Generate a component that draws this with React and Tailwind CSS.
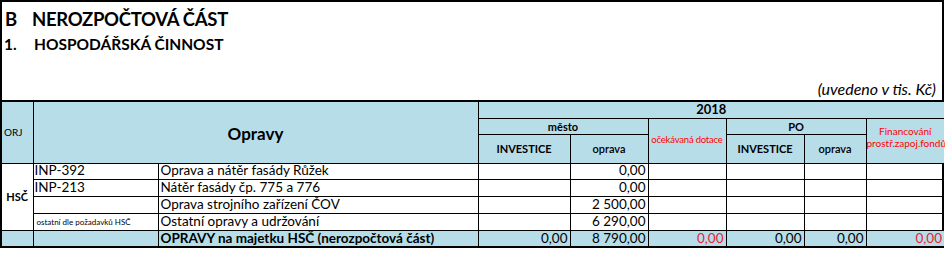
import React from 'react';

const rows = [
  { code: 'INP-392', name: 'Oprava a nátěr fasády Růžek', oprava: '0,00', line: 'solid' },
  { code: 'INP-213', name: 'Nátěr fasády čp. 775 a 776', oprava: '0,00', line: 'dotted' },
  { code: '', name: 'Oprava strojního zařízení ČOV', oprava: '2 500,00', line: 'solid' },
  { code: 'ostatní dle požadavků HSČ', small: true, name: 'Ostatní opravy a udržování', oprava: '6 290,00', line: 'solid' },
];

const App = () => {
  const cell = 'border border-black p-0';
  const head = 'border border-black bg-[#b7dde8] p-0 text-center font-bold';

  return (
    <div className="w-[945px] h-[253px] bg-white text-black" style={{ fontFamily: 'Lato, "Open Sans", sans-serif' }}>
      <div className="w-[944px] border-l-2 border-t-2 border-r-2 border-black">
        {/* Title block */}
        <div className="h-[98px] flex flex-col">
          <div className="flex items-center h-[32px] pt-[2px] text-[18.5px] font-bold leading-none">
            <span className="w-[30px] pl-[3px]">B</span>
            <span className="tracking-[-0.3px]">NEROZPOČTOVÁ ČÁST</span>
          </div>
          <div className="flex items-center h-[22px] text-[15.5px] font-bold leading-none">
            <span className="w-[32px] pl-[2px]">1.</span>
            <span>HOSPODÁŘSKÁ ČINNOST</span>
          </div>
          <div className="flex-1 flex items-end justify-end pr-[6px] pb-[3px] text-[16px] italic leading-none">
            (uvedeno v tis. Kč)
          </div>
        </div>

        <table className="table-fixed border-collapse w-[942px] border-t-2 border-b-2 border-black text-[13.5px] leading-none">
          <colgroup>
            <col className="w-[31px]" />
            <col className="w-[125px]" />
            <col className="w-[320px]" />
            <col className="w-[92px]" />
            <col className="w-[78px]" />
            <col className="w-[78px]" />
            <col className="w-[78px]" />
            <col className="w-[62px]" />
            <col className="w-[78px]" />
          </colgroup>
          <thead>
            <tr className="h-[17px]">
              <td rowSpan={3} className={`${head} text-left text-[10px] font-normal pl-[2px] border-l-0`}>ORJ</td>
              <td rowSpan={3} colSpan={2} className={`${head} text-[17px] pt-[2px]`}>Opravy</td>
              <td colSpan={6} className={`${head} text-[13px] border-r-0`}>2018</td>
            </tr>
            <tr className="h-[16px]">
              <td colSpan={2} className={`${head} text-[11px]`}>město</td>
              <td rowSpan={2} className={`${head} text-[9.5px] font-normal text-[#ff0000] whitespace-nowrap tracking-[-0.2px] pb-[2px]`}>očekávaná dotace</td>
              <td colSpan={2} className={`${head} text-[11px]`}>PO</td>
              <td rowSpan={2} className={`${head} text-[10px] font-normal text-[#ff0000] leading-[12px] pb-[8px] border-r-0 whitespace-nowrap`}>
                Financování<br />prostř.zapoj.fondů
              </td>
            </tr>
            <tr className="h-[29px]">
              <td className={`${head} text-[11px]`}>INVESTICE</td>
              <td className={`${head} text-[11px] font-semibold`}>oprava</td>
              <td className={`${head} text-[11px]`}>INVESTICE</td>
              <td className={`${head} text-[11px] font-semibold`}>oprava</td>
            </tr>
          </thead>
          <tbody>
            {rows.map((r, i) => {
              const b = r.line === 'dotted' ? 'border-b-dotted' : '';
              return (
                <tr key={i} className={i === 0 ? 'h-[16px]' : 'h-[17px]'}>
                  {i === 0 && (
                    <td rowSpan={4} className={`${cell} text-center text-[11px] font-bold border-l-0`}>HSČ</td>
                  )}
                  <td
                    className={`${cell} ${b} border-r-dotted pl-[1px] ${r.small ? 'text-[8px] pl-[3px]' : ''}`}
                  >
                    {r.code}
                  </td>
                  <td className={`${cell} ${b} border-l-dotted pl-[2px]`}>{r.name}</td>
                  <td className={`${cell} ${b}`}></td>
                  <td className={`${cell} ${b} text-right pr-[2px]`}>{r.oprava}</td>
                  <td className={`${cell} ${b}`}></td>
                  <td className={`${cell} ${b}`}></td>
                  <td className={`${cell} ${b}`}></td>
                  <td className={`${cell} ${b} border-r-0`}></td>
                </tr>
              );
            })}
            <tr className="h-[17px] bg-[#b7dde8]">
              <td className={`${cell} border-l-0`}></td>
              <td className={`${cell} border-r-dotted`}></td>
              <td className={`${cell} border-l-dotted font-bold pl-[2px]`}>OPRAVY na majetku HSČ (nerozpočtová část)</td>
              <td className={`${cell} text-right pr-[2px]`}>0,00</td>
              <td className={`${cell} text-right pr-[2px]`}>8 790,00</td>
              <td className={`${cell} text-right pr-[2px] text-[#e8213a]`}>0,00</td>
              <td className={`${cell} text-right pr-[2px]`}>0,00</td>
              <td className={`${cell} text-right pr-[2px]`}>0,00</td>
              <td className={`${cell} text-right pr-[2px] text-[#e8213a] border-r-0`}>0,00</td>
            </tr>
          </tbody>
        </table>
      </div>
    </div>
  );
};

export default App;
